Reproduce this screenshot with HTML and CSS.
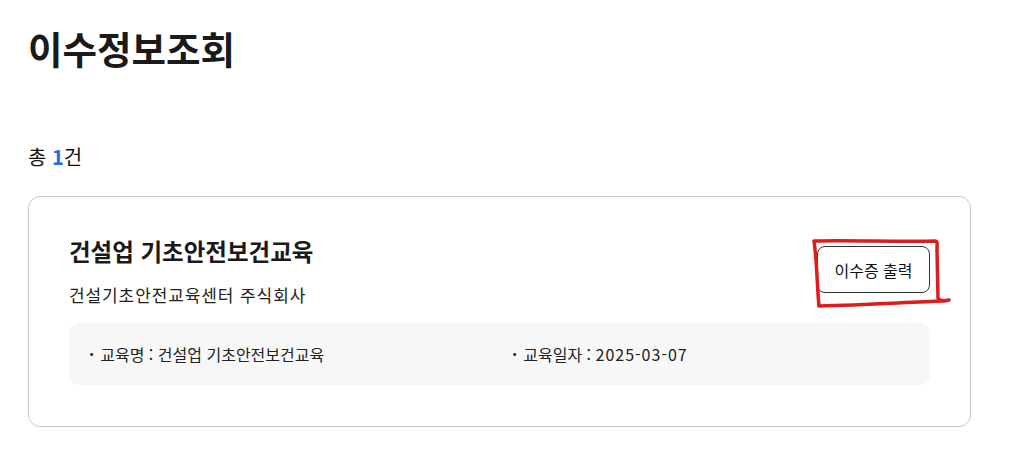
FILE: index.html
```html
<!DOCTYPE html>
<html lang="ko">
<head>
	<meta charset="UTF-8">
	<meta name="viewport" content="width=device-width, initial-scale=1.0">
	<title>이수정보조회</title>
	<link rel="stylesheet" href="styles.css">
</head>
<body>
	<div class="page">
		<h1 class="page-title">이수정보조회</h1>

		<p class="total">총 <strong>1</strong>건</p>

		<div class="card">
			<div class="card-head">
				<div>
					<h2 class="course-name">건설업 기초안전보건교육</h2>
					<p class="org">건설기초안전교육센터 주식회사</p>
				</div>
				<div class="btn-wrap">
					<button class="btn-print" type="button">이수증 출력</button>
					<svg class="mark" width="140" height="72" viewBox="0 0 140 72">
						<path d="M5 5 C40 4 90 6 126 5 C129 5 128 9 128 14 L129 62 C131 66 136 65 140 64 L135 65 C100 66 60 69 10 70 C8 50 8 25 5 5 Z" fill="none" stroke="#e01b1b" stroke-width="3.5" stroke-linejoin="round" stroke-linecap="round"/>
					</svg>
				</div>
			</div>
			<div class="info">
				<span class="info-item">교육명 : 건설업 기초안전보건교육</span>
				<span class="info-item">교육일자 : <span class="date">2025-03-07</span></span>
			</div>
		</div>
	</div>
</body>
</html>
```

FILE: styles.css
```css
html, body { margin: 0; padding: 0; background-color: #fff; }
body { font-family: "Noto Sans CJK KR", "Noto Sans", sans-serif; color: #111; }

.page { padding: 22px 43px 0 28px; }

.page-title {
	margin: 0;
	font-size: 37.5px;
	font-weight: bold;
	color: #1a1a1a;
	line-height: 52px;
}

.total {
	margin: 69px 0 0 0;
	font-size: 20px;
	line-height: 28px;
}
.total strong { color: #1f6fe0; font-weight: bold; }

.card {
	margin-top: 25px;
	border: 1px solid #c8c8c8;
	border-radius: 12px;
	padding: 37px 40px 41px 40px;
}

.card-head {
	display: flex;
	justify-content: space-between;
	align-items: flex-start;
}

.course-name {
	margin: 0;
	font-size: 23.5px;
	font-weight: bold;
	line-height: 34px;
	color: #1a1a1a;
}

.org {
	margin: 15px 0 0 0;
	font-size: 17px;
	letter-spacing: 0.9px;
	line-height: 24px;
	color: #222;
}

.btn-wrap { position: relative; margin-top: 12px; }

.btn-print {
	width: 113px;
	height: 47px;
	border: 1px solid #333;
	border-radius: 8px;
	background: #fff;
	font-family: inherit;
	font-size: 16px;
	color: #111;
}

.mark {
	position: absolute;
	left: -8px;
	top: -10px;
	overflow: visible;
}

.info {
	margin-top: 16px;
	background-color: #f7f7f7;
	border-radius: 10px;
	padding: 19px 20px;
	display: grid;
	grid-template-columns: 423px 1fr;
	font-size: 16px;
	line-height: 24px;
	color: #222;
}

.info-item::before {
	content: "·";
	font-weight: bold;
	margin-right: 6px;
}

.info .date { letter-spacing: 1px; }
```
